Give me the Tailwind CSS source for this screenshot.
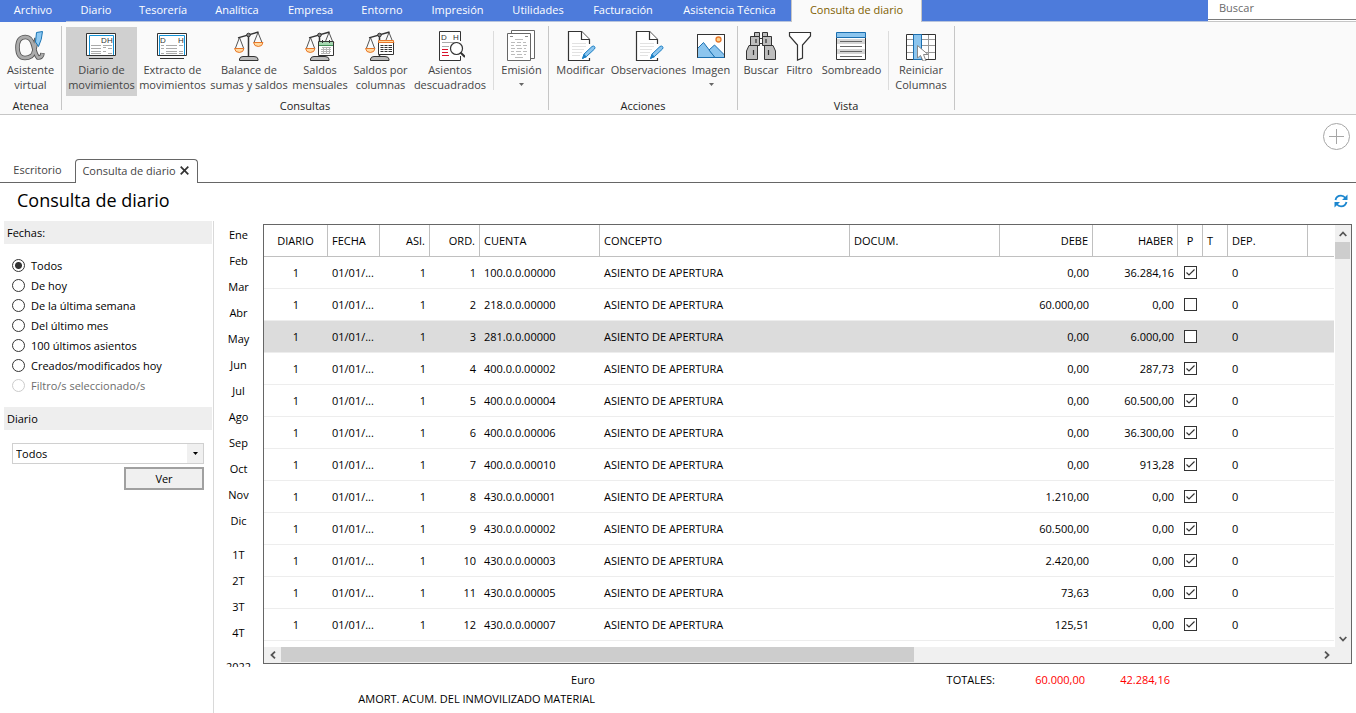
<!DOCTYPE html>
<html lang="es">
<head>
<meta charset="utf-8">
<title>Consulta de diario</title>
<script src="https://cdn.jsdelivr.net/npm/@tailwindcss/browser@4"></script>
</head>
<body class="flex h-screen flex-col overflow-hidden bg-white font-['Open_Sans','Noto_Sans',sans-serif] text-[11px] leading-[15px] text-black">

<svg class="hidden" aria-hidden="true">
  <symbol id="scales" viewBox="0 0 30 30">
    <path d="M5.500 6.500 1.500 17M5.500 6.500 9.500 17M24 1.500 20 11.500M24 1.500 28 11.500" fill="none" stroke="#555"/>
    <path d="M4 6.800 24.500 1" stroke="#333" stroke-width="1.300"/>
    <path d="M14.500 5V25" stroke="#333" stroke-width="1.500"/>
    <circle cx="14.500" cy="4" r="1.800" fill="#888" stroke="#333"/>
    <path d="M.5 17.500H10Q9.500 21.500 5.300 21.500T.5 17.500ZM19.500 11.500H29Q28.500 15.500 24.300 15.500T19.500 11.500Z" fill="#ffd9a0" stroke="#e8782a"/>
    <path d="M5.500 29.500V28Q6 25.500 9 25.500H20Q23.500 25.500 24 28V29.500Z" fill="#bbb" stroke="#333"/>
  </symbol>
  <symbol id="edit" viewBox="0 0 30 30">
    <path d="M23.500 13V8.500L15.500.5H2.500V29.500H23.500V27" fill="#fff" stroke="#333" stroke-width="1.200"/>
    <path d="M15.500.5V8.500H23.500" fill="#fff" stroke="#333" stroke-width="1.200"/>
    <path d="M6 12.500H20M6 15.500H20M6 18.500H18M6 21.500H16M6 24.500H14" stroke="#e2e2e2"/>
    <path d="M16.500 27.500 18 23 26 15.500Q27.500 14.500 28.500 15.500T28.500 18L20.500 25.500Z" fill="#8cc5ee" stroke="#1b7fc4"/>
    <path d="M16 28 18 23 21 26Z" fill="#1b7fc4"/>
  </symbol>
</svg>

<!-- Menu tabs -->
<nav class="flex h-[22px] shrink-0 bg-[#4d7bdb] text-[11px] text-white" aria-label="Menú">
  <button class="h-[22px] w-[66px] pb-[3px]">Archivo</button>
  <div class="flex flex-1 border-b border-[#b8c4dc]">
    <button class="w-[60px] pb-[3px]">Diario</button>
    <button class="w-[74px] pb-[3px]">Tesorería</button>
    <button class="w-[74px] pb-[3px]">Analítica</button>
    <button class="w-[73px] pb-[3px]">Empresa</button>
    <button class="w-[70px] pb-[3px]">Entorno</button>
    <button class="w-[81px] pb-[3px]">Impresión</button>
    <button class="w-[80px] pb-[3px]">Utilidades</button>
    <button class="w-[90px] pb-[3px]">Facturación</button>
    <button class="w-[123px] pb-[3px]">Asistencia Técnica</button>
    <button class="h-[22px] w-[131px] border-x border-[#c6c6c6] bg-[#fafafa] pb-[3px] text-[#7f6000]">Consulta de diario</button>
  </div>
  <div class="w-[148px] border-b border-[#c6c6c6] bg-white">
    <input aria-label="Buscar" placeholder="Buscar" class="h-[19px] w-full border-b border-[#7a7a7a] bg-white pb-[5px] pl-[11px] text-[11px] text-black outline-none placeholder:text-[#6a6a6a]">
  </div>
</nav>

<!-- Ribbon -->
<section class="flex h-[93px] shrink-0 border-b border-[#c6c6c6] bg-[#fafafa] pt-1 text-[#444]">
  <div class="mb-1 flex w-[62px] flex-col border-r border-[#c6c6c6]">
    <div class="flex h-[72px] shrink-0 pt-px">
      <button class="flex w-[61px] flex-col items-center pt-1">
        <svg class="mb-px h-[30px] w-[31px]" viewBox="0 0 31 30">
          <path d="M21.500 7Q19.500 23 16.500 25T10 27Q2.500 27 2.500 16.500T10.500 6Q16.500 6 18.500 15T23 26.500Q27 27 27.500 22" fill="none" stroke="#555" stroke-width="4.600"/>
          <path d="M21.500 7Q19.500 23 16.500 25T10 27Q2.500 27 2.500 16.500T10.500 6Q16.500 6 18.500 15T23 26.500Q27 27 27.500 22.500" fill="none" stroke="#ababab" stroke-width="2.800"/>
          <path d="M21.500 1.500 27.500.5Q27 8.500 23.500 15.500L20.500 11Z" fill="#8ec9f2" stroke="#1b75b5"/>
        </svg>
        <span>Asistente<br>virtual</span>
      </button>
    </div>
    <div class="shrink-0 text-center text-[#222]">Atenea</div>
  </div>

  <div class="mb-1 flex w-[487px] flex-col border-r border-[#c6c6c6]">
    <div class="flex h-[72px] shrink-0 whitespace-nowrap pl-1 pt-px">
      <button class="flex h-[69px] w-[71px] flex-col items-center bg-[#d0d0d0] pt-1">
        <svg class="mb-px h-[30px] w-[31px]" viewBox="0 0 31 30">
          <path d="M.5 2.500H29.500V24.500H.5Z" fill="#fff" stroke="#333"/>
          <path d="M3.500 24V4.500H27.500V24" fill="none" stroke="#1593d6"/>
          <text x="15" y="12" font-size="8" fill="#333" font-family="Liberation Sans, sans-serif">D</text><text x="21" y="12" font-size="8" fill="#333" font-family="Liberation Sans, sans-serif">H</text>
          <path d="M5 14.500H15M5 17.500H15M5 20.500H15M5 22.500H15M17 14.500H26M17 16.500H20M22 17.500H26M17 20.500H20M22 22.500H26" stroke="#aaa"/>
          <path d="M3 27.500H27" stroke="#333"/>
        </svg>
        <span>Diario de<br>movimientos</span>
      </button>
      <button class="flex w-[71px] flex-col items-center pt-1">
        <svg class="mb-px h-[30px] w-[31px]" viewBox="0 0 31 30">
          <path d="M.5 2.500H29.500V24.500H.5Z" fill="#fff" stroke="#333"/>
          <path d="M2.500 24V4.500H27.500V24" fill="none" stroke="#1593d6"/>
          <text x="3" y="12" font-size="8" fill="#333" font-family="Liberation Sans, sans-serif">D</text><text x="21" y="12" font-size="8" fill="#333" font-family="Liberation Sans, sans-serif">H</text>
          <path d="M4 14.500H7M9 14.500H20M22 14.500H26M4 17.500H7M9 17.500H20M9 20.500H20M22 20.500H26M4 22.500H7M9 22.500H20M22 22.500H26" stroke="#aaa"/>
          <path d="M3 27.500H27" stroke="#333"/>
        </svg>
        <span>Extracto de<br>movimientos</span>
      </button>
      <button class="flex w-[82px] flex-col items-center pt-1">
        <svg class="mb-px h-[30px] w-[30px]"><use href="#scales"/></svg>
        <span>Balance de<br>sumas y saldos</span>
      </button>
      <button class="flex w-[60px] flex-col items-center pt-1">
        <svg class="mb-px h-[30px] w-[30px]" viewBox="0 0 30 30">
          <use href="#scales"/>
          <path d="M13.500 10.500H28.500V24.500H13.500Z" fill="#fff" stroke="#333"/>
          <path d="M14 11H28V14H14Z" fill="#a5d6b0"/><path d="M14 14.500H28" stroke="#3f8c54"/>
          <path d="M17.500 9V12M24.500 9V12" stroke="#333"/>
          <path d="M17 16.500H26M16 18.500H26M16 20.500H26M16 22.500H24M18.500 16V23M21.500 16V23M24.500 16V23" stroke="#b5b5b5"/>
        </svg>
        <span>Saldos<br>mensuales</span>
      </button>
      <button class="flex w-[61px] flex-col items-center pt-1">
        <svg class="mb-px h-[30px] w-[31px]" viewBox="0 0 31 30">
          <use href="#scales" width="30" height="30"/>
          <path d="M13.500 11V23.500H28.500V11" fill="#fff" stroke="#333"/>
          <path d="M13.500 9.500H28.500V11.500H13.500Z" fill="#ffd9a0" stroke="#e8782a"/>
          <path d="M15.500 14.500H27M15.500 16.500H27M15.500 18.500H27M15.500 20.500H27" stroke="#333" stroke-dasharray="3 1 3 1 3.500 1"/>
        </svg>
        <span>Saldos por<br>columnas</span>
      </button>
      <button class="flex w-[78px] flex-col items-center pt-1">
        <svg class="mb-px h-[30px] w-[30px]" viewBox="0 0 30 30">
          <path d="M25.500 10V.5H4.500V29.500H25.500V25" fill="#fff" stroke="#333"/>
          <text x="6" y="9" font-size="8" fill="#333" font-family="Liberation Sans, sans-serif">D</text><text x="18" y="9" font-size="8" fill="#333" font-family="Liberation Sans, sans-serif">H</text>
          <path d="M7 11.500H23M7 15.500H14" stroke="#aaa"/>
          <path d="M7 18.500H13M7 21.500H13M7 24.500H14" stroke="#d8132c"/>
          <circle cx="21.500" cy="17.500" r="6" fill="#fff" stroke="#333" stroke-width="1.200"/>
          <path d="M25.500 21.500 30 26" stroke="#333" stroke-width="2"/>
        </svg>
        <span>Asientos<br>descuadrados</span>
      </button>
      <div class="ml-1 mt-1 mb-2 w-px bg-[#dcdcdc]"></div>
      <button class="ml-1 flex w-[47px] flex-col items-center pt-[3px]">
        <svg class="mb-px h-[31px] w-[31px]" viewBox="0 -1 31 31">
          <path d="M5.500-.5H28.500V27.500H5.500Z" fill="#fff" stroke="#666"/>
          <path d="M1.500 2.500H24.500V29.500H1.500Z" fill="#fff" stroke="#666"/>
          <path d="M4 5.500H7M19 5.500H22" stroke="#888"/>
          <path d="M9 8.500H17M5 11.500H9M11 11.500H15M17 11.500H20M5 14.500H8M10 14.500H15M17 14.500H21M5 17.500H9M11 17.500H16M18 17.500H20M5 20.500H8M10 20.500H15M17 20.500H21M5 23.500H9M11 23.500H16M18 23.500H20M9 26.500H17" stroke="#bbb"/>
        </svg>
        <span>Emisión</span>
        <svg class="mt-1.5 h-[3px] w-[5px]" viewBox="0 0 5 3"><path d="M0 0H5L2.500 3Z" fill="#666"/></svg>
      </button>
    </div>
    <div class="shrink-0 text-center text-[#222]">Consultas</div>
  </div>

  <div class="mb-1 flex w-[189px] flex-col border-r border-[#c6c6c6]">
    <div class="flex h-[72px] shrink-0 whitespace-nowrap pl-1 pt-px">
      <button class="flex w-[55px] flex-col items-center pt-1">
        <svg class="mb-px h-[30px] w-[31px]" viewBox="-1 0 31 30"><use href="#edit" width="30" height="30"/></svg>
        <span>Modificar</span>
      </button>
      <button class="flex w-[81px] flex-col items-center pt-1">
        <svg class="mb-px h-[30px] w-[31px]" viewBox="-1 0 31 30"><use href="#edit" width="30" height="30"/></svg>
        <span>Observaciones</span>
      </button>
      <button class="flex w-[44px] flex-col items-center pt-1">
        <svg class="mb-px h-[30px] w-[30px]" viewBox="0 0 30 30">
          <path d="M1.500 3.500H28.500V26.500H1.500Z" fill="#fff" stroke="#333"/>
          <path d="M1.500 17.500 7.500 11.500 19 26.500H1.500Z" fill="#8cc5ee" stroke="#1b6fb0"/>
          <path d="M13 19 18.500 14 28.500 24V26.500H19Z" fill="#8cc5ee" stroke="#1b6fb0"/>
          <circle cx="22.500" cy="8.500" r="2.500" fill="#ffd28a" stroke="#e8782a" stroke-width="1.300"/>
          <path d="M1.500 26.500V3.500H28.500V26.500" fill="none" stroke="#333"/>
        </svg>
        <span>Imagen</span>
        <svg class="mt-1.5 h-[3px] w-[5px]" viewBox="0 0 5 3"><path d="M0 0H5L2.500 3Z" fill="#666"/></svg>
      </button>
    </div>
    <div class="shrink-0 text-center text-[#222]">Acciones</div>
  </div>

  <div class="mb-1 flex w-[217px] flex-col border-r border-[#c6c6c6]">
    <div class="flex h-[72px] shrink-0 whitespace-nowrap pl-1 pt-px">
      <button class="flex w-[38px] flex-col items-center pt-1">
        <svg class="mb-px h-[30px] w-[30px]" viewBox="0 0 30 30">
          <g fill="#bdbdbd" stroke="#333"><path d="M8.500 1.500H13.500V5.500H8.500ZM16.500 1.500H21.500V5.500H16.500Z"/>
          <path d="M13.500 7.500H16.500V12.500H13.500Z" fill="#fff"/>
          <path d="M4.500 5.500H13.500V14.500H4.500ZM16.500 5.500H25.500V14.500H16.500Z"/>
          <path d="M3 14.500H11.500V28.500H.5V20ZM18.500 14.500H27L29.500 20V28.500H18.500Z"/></g>
          <path d="M10 8V12M20 8V12M7.500 19V24M22.500 19V24" stroke="#333" stroke-width="1.200"/>
        </svg>
        <span>Buscar</span>
      </button>
      <button class="flex w-[39px] flex-col items-center pt-1">
        <svg class="mb-px h-[30px] w-[31px]" viewBox="0 0 31 30">
          <path d="M5.500 1.500H26.500V5L18.500 14V27L13.500 29V14L5.500 5Z" fill="#fff" stroke="#333" stroke-width="1.200"/>
        </svg>
        <span>Filtro</span>
      </button>
      <button class="flex w-[65px] flex-col items-center pt-1">
        <svg class="mb-px h-[30px] w-[31px]" viewBox="0 0 31 30">
          <path d="M.5 6.500H29.500V28.500H.5Z" fill="#fff" stroke="#333"/>
          <path d="M1 8H29V13H1ZM1 18H29V23H1Z" fill="#d6d6d6"/>
          <path d="M.5 1.500H29.500V6.500H.5Z" fill="#8cc5ee" stroke="#1b6fb0"/>
          <path d="M4 10.500H26M4 15.500H26M4 20.500H26M4 25.500H26" stroke="#666"/>
        </svg>
        <span>Sombreado</span>
      </button>
      <div class="ml-1 mt-1 mb-2 w-px bg-[#dcdcdc]"></div>
      <button class="ml-[3px] flex w-[58px] flex-col items-center pt-1">
        <svg class="mb-px h-[30px] w-[30px]" viewBox="0 0 30 30">
          <path d="M.5 3.500H29.500V28.500H.5Z" fill="#fff" stroke="#333"/>
          <path d="M1 8.500H29M1 14.500H29M1 21.500H29M22.500 4V28" stroke="#999"/>
          <path d="M7.500 3.500H15.500V28.500H7.500Z" fill="#8cc5ee" stroke="#1b6fb0"/>
          <path d="M11.500 14.500V27L14.500 24.500 17 30H20L17.500 23.500H22Z" fill="#fff" stroke="#888"/>
        </svg>
        <span>Reiniciar<br>Columnas</span>
      </button>
    </div>
    <div class="shrink-0 text-center text-[#222]">Vista</div>
  </div>
</section>

<!-- Add button -->
<div class="flex h-[44px] shrink-0 justify-end pr-[6px] pt-2">
  <button aria-label="Añadir" class="h-[27px] w-[27px]">
    <svg class="h-[27px] w-[27px]" viewBox="0 0 27 27" fill="none" stroke="#a6a6a6"><circle cx="13.500" cy="13.500" r="13"/><path d="M6 13.500H21M13.500 6V21"/></svg>
  </button>
</div>

<!-- Document tabs -->
<div class="flex h-6 shrink-0 text-[#444]">
  <button class="w-[75px] border-b border-[#666] pb-0.5">Escritorio</button>
  <div class="flex w-[123px] items-center justify-center gap-1 rounded-t-[4px] border border-b-0 border-[#666] pb-[3px] pr-0.5">
    <span>Consulta de diario</span>
    <button aria-label="Cerrar"><svg class="h-[9px] w-[9px]" viewBox="0 0 9 9"><path d="M.7.7 8.300 8.300M8.300.7.7 8.300" stroke="#333" stroke-width="1.700"/></svg></button>
  </div>
  <div class="flex-1 border-b border-[#666]"></div>
</div>

<header class="flex h-[38px] shrink-0 items-center justify-between pl-[17px] pr-2">
  <h1 class="pb-1 text-[18px] leading-6">Consulta de diario</h1>
  <button aria-label="Actualizar" class="pb-0.5">
    <svg class="h-[14px] w-[14px]" viewBox="0 0 14 14">
      <path d="M1.500 6Q2.500 1.700 7 1.700 9.500 1.700 11.500 4M12.500 8Q11.500 12.300 7 12.300 4.500 12.300 2.500 10" fill="none" stroke="#1b86cf" stroke-width="1.800"/>
      <path d="M13.500.5V6H8ZM.5 13.500V8H6Z" fill="#1b86cf"/>
    </svg>
  </button>
</header>

<main class="flex min-h-0 flex-1">
  <!-- Filters -->
  <aside class="flex w-[214px] shrink-0 flex-col border-r border-[#d9d9d9] pl-1 pr-px">
    <h2 class="h-[23px] bg-[#eee] pl-[3px] leading-[23px]">Fechas:</h2>
    <div class="flex flex-col pb-3 pl-2 pt-[11px]" id="fechas"></div>
    <h2 class="h-[23px] bg-[#eee] pl-[3px] leading-[23px]">Diario</h2>
    <div class="relative ml-2 mr-2 mt-[13px] flex h-[21px] border border-[#d0d0d0]">
      <select aria-label="Diario" class="w-full appearance-none bg-white pl-[3px] text-[11px] leading-[19px] outline-none"><option>Todos</option></select>
      <span class="pointer-events-none absolute inset-y-0 right-0 flex w-4 items-center justify-center bg-[#f0f0f0]"><svg class="h-[3px] w-[5px]" viewBox="0 0 5 3"><path d="M0 0H5L2.500 3Z" fill="#000"/></svg></span>
    </div>
    <button class="mr-2 mt-[3px] h-[23px] w-20 self-end border-2 border-[#a0a0a0] bg-[#f0f0f0]">Ver</button>
  </aside>

  <!-- Periods -->
  <div class="mb-[46px] flex w-[49px] shrink-0 flex-col overflow-hidden" id="periodos"></div>

  <section class="flex min-w-0 flex-1 flex-col pr-1 pt-[3px]">
    <div class="flex h-[440px] flex-col border border-[#666]">
      <div class="flex min-h-0 flex-1">
        <div class="min-w-0 flex-1 overflow-hidden">
          <table class="w-full table-fixed border-separate border-spacing-0 whitespace-nowrap">
            <colgroup>
              <col class="w-[64px]"><col class="w-[52px]"><col class="w-[50px]"><col class="w-[50px]"><col class="w-[120px]"><col class="w-[250px]"><col class="w-[150px]"><col class="w-[93px]"><col class="w-[85px]"><col class="w-[25px]"><col class="w-[25px]"><col class="w-[80px]"><col>
            </colgroup>
            <thead>
              <tr class="h-8 *:border-b *:border-r *:border-[#c0c0c0] *:p-0 *:px-1 *:font-normal">
                <th>DIARIO</th><th class="text-left">FECHA</th><th class="text-right">ASI.</th><th class="text-right">ORD.</th><th class="text-left">CUENTA</th><th class="text-left">CONCEPTO</th><th class="text-left">DOCUM.</th><th class="text-right">DEBE</th><th class="text-right">HABER</th><th>P</th><th class="text-left">T</th><th class="text-left">DEP.</th><th class="border-r-0!"></th>
              </tr>
            </thead>
            <tbody id="filas"></tbody>
          </table>
        </div>
        <div class="ml-px flex w-4 shrink-0 flex-col items-center bg-[#f0f0f0] pr-px">
          <button aria-label="Subir" class="flex h-[17px] w-full items-center justify-center"><svg class="h-[6px] w-[8px]" viewBox="0 0 8 6"><path d="M.7 5 4 1.500 7.300 5" fill="none" stroke="#555" stroke-width="1.800"/></svg></button>
          <div class="h-[17px] w-full bg-[#cdcdcd]"></div>
          <div class="flex-1"></div>
          <button aria-label="Bajar" class="flex h-[17px] w-full items-center justify-center"><svg class="h-[6px] w-[8px]" viewBox="0 0 8 6"><path d="M.7 1 4 4.500 7.300 1" fill="none" stroke="#555" stroke-width="1.800"/></svg></button>
        </div>
      </div>
      <div class="flex h-[16px] bg-[#f0f0f0] pb-px">
        <button aria-label="Izquierda" class="flex w-[17px] items-center justify-center"><svg class="h-[8px] w-[6px]" viewBox="0 0 6 8"><path d="M5 .7 1.500 4 5 7.300" fill="none" stroke="#555" stroke-width="1.800"/></svg></button>
        <div class="flex min-w-0 flex-1"><div class="w-[61%] bg-[#cdcdcd]"></div></div>
        <button aria-label="Derecha" class="mr-4 flex w-[17px] items-center justify-center"><svg class="h-[8px] w-[6px]" viewBox="0 0 6 8"><path d="M1 .7 4.500 4 1 7.300" fill="none" stroke="#555" stroke-width="1.800"/></svg></button>
      </div>
    </div>
    <!-- Totals -->
    <footer class="grid grid-cols-[332px_400px_90px_85px] gap-y-1 pt-2 text-right">
      <span>Euro</span><span>TOTALES:</span><span class="text-[#ff0000]">60.000,00</span><span class="text-[#ff0000]">42.284,16</span>
      <span>AMORT. ACUM. DEL INMOVILIZADO MATERIAL</span>
    </footer>
  </section>
</main>

<script>
  const fechas = ["Todos", "De hoy", "De la última semana", "Del último mes", "100 últimos asientos", "Creados/modificados hoy", "Filtro/s seleccionado/s"];
  document.getElementById("fechas").innerHTML = fechas.map((t, i) => `
    <label class="flex h-5 items-center gap-[6px] has-disabled:text-[#6d6d6d]">
      <input type="radio" name="fecha" ${i === 0 ? "checked" : ""} ${i === 6 ? "disabled" : ""} class="size-[13px] appearance-none rounded-full border border-[#333] bg-white checked:bg-[radial-gradient(circle,#333_3px,#fff_4px)] disabled:border-[#ccc]">${t}
    </label>`).join("");

  const meses = ["Ene", "Feb", "Mar", "Abr", "May", "Jun", "Jul", "Ago", "Sep", "Oct", "Nov", "Dic"];
  const otros = ["1T", "2T", "3T", "4T"];
  document.getElementById("periodos").innerHTML =
    meses.map(t => `<button class="h-[26px] shrink-0">${t}</button>`).join("") +
    `<div class="h-2 shrink-0"></div>` +
    otros.map(t => `<button class="h-[26px] shrink-0">${t}</button>`).join("") +
    `<div class="h-2 shrink-0"></div><button class="h-[26px] shrink-0">2022</button>`;

  const datos = [
    ["100.0.0.00000", "0,00", "36.284,16", 1], ["218.0.0.00000", "60.000,00", "0,00", 0],
    ["281.0.0.00000", "0,00", "6.000,00", 0], ["400.0.0.00002", "0,00", "287,73", 1],
    ["400.0.0.00004", "0,00", "60.500,00", 1], ["400.0.0.00006", "0,00", "36.300,00", 1],
    ["400.0.0.00010", "0,00", "913,28", 1], ["430.0.0.00001", "1.210,00", "0,00", 1],
    ["430.0.0.00002", "60.500,00", "0,00", 1], ["430.0.0.00003", "2.420,00", "0,00", 1],
    ["430.0.0.00005", "73,63", "0,00", 1], ["430.0.0.00007", "125,51", "0,00", 1]];
  document.getElementById("filas").innerHTML = datos.map(([c, d, h, p], i) => `
    <tr class="h-8 *:border-b *:border-[#ededed] *:p-0 *:px-1 ${i === 2 ? "bg-[#dcdcdc]" : ""}">
      <td class="text-center">1</td><td>01/01/...</td><td class="text-right">1</td><td class="text-right">${i + 1}</td>
      <td>${c}</td><td>ASIENTO DE APERTURA</td><td></td><td class="text-right">${d}</td><td class="text-right">${h}</td>
      <td><span class="relative flex size-[13px] ml-[2px]"><input type="checkbox" aria-label="Punteado ${i + 1}" ${p ? "checked" : ""} class="peer size-[13px] appearance-none border border-[#333] bg-white"><svg class="pointer-events-none absolute inset-0 hidden peer-checked:block" viewBox="0 0 13 13"><path d="M2.500 6.500 5 9 10.500 3.500" fill="none" stroke="#333" stroke-width="1.200"/></svg></span></td>
      <td></td><td>0</td><td></td>
    </tr>`).join("");
</script>
</body>
</html>
